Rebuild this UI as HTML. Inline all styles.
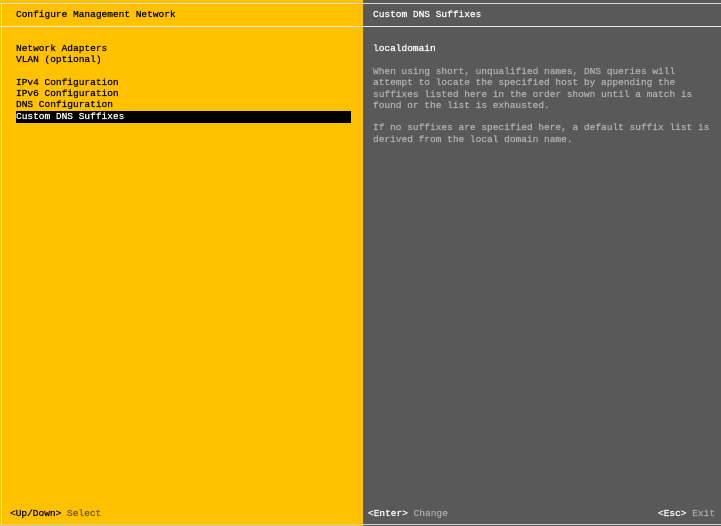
<!DOCTYPE html>
<html><head><style>
*{margin:0;padding:0}
body{width:721px;height:526px;overflow:hidden;background:#575757;font-family:"Liberation Mono",monospace;font-size:9.5px;position:relative}
.l{position:absolute;left:0;top:0;width:363px;height:526px;background:#ffc100}
.r{position:absolute;left:363px;top:0;width:358px;height:526px;background:#595959}
.t{position:absolute;white-space:pre;line-height:11.3px;-webkit-text-stroke:0.25px currentColor}
.hl{position:absolute;left:0;width:721px;height:1px;background:#e8e8e8}
</style></head><body>
<div class="l"></div><div class="r"></div>
<div style="position:absolute;left:1px;top:3px;width:1px;height:521px;background:#ffe79a"></div>
<div class="hl" style="top:3px;background:#d8d8d8"></div>
<div class="hl" style="top:26px"></div>
<div class="hl" style="top:524px;background:#d0d0d0"></div>
<div class="t" style="left:16px;top:9px;color:#000">Configure Management Network</div>
<div class="t" style="left:373px;top:9px;color:#fff">Custom DNS Suffixes</div>
<div style="position:absolute;left:16px;top:111px;width:335px;height:12px;background:#000"></div>
<div class="t" style="left:16px;top:43px;color:#000">Network Adapters
VLAN (optional)

IPv4 Configuration
IPv6 Configuration
DNS Configuration
<span style="color:#fff">Custom DNS Suffixes</span></div>
<div class="t" style="left:373px;top:43px;color:#fff">localdomain</div>
<div class="t" style="left:373px;top:66px;color:#b0b0b0">When using short, unqualified names, DNS queries will
attempt to locate the specified host by appending the
suffixes listed here in the order shown until a match is
found or the list is exhausted.

If no suffixes are specified here, a default suffix list is
derived from the local domain name.</div>
<div class="t" style="left:10px;top:508px;color:#000">&lt;Up/Down&gt; <span style="color:#6b5a1a">Select</span></div>
<div class="t" style="left:368px;top:508px;color:#fff">&lt;Enter&gt; <span style="color:#aaa">Change</span></div>
<div class="t" style="left:658px;top:508px;color:#fff">&lt;Esc&gt; <span style="color:#aaa">Exit</span></div>
</body></html>
